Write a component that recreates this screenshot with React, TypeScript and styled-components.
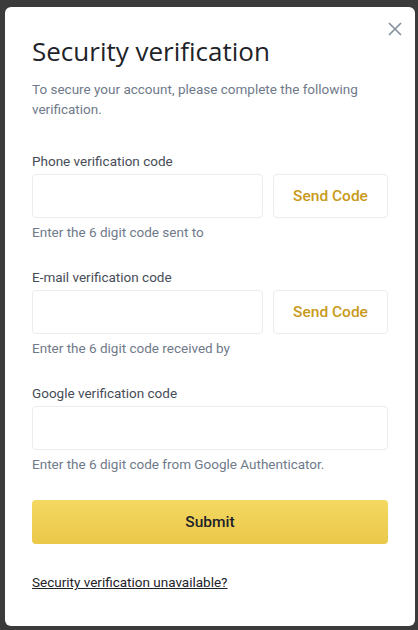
import React from "react";
import styled, { createGlobalStyle } from "styled-components";

const GlobalStyle = createGlobalStyle`
  html, body {
    margin: 0;
    padding: 0;
    background: #3b3b3b;
  }
  body {
    font-family: Roboto, "Noto Sans", sans-serif;
  }
  * {
    box-sizing: border-box;
  }
`;

const Overlay = styled.div`
  min-height: 630px;
  padding: 7px 3px 4px 5px;
  display: flex;
`;

const Modal = styled.div`
  position: relative;
  flex: 1;
  background: #ffffff;
  border-radius: 6px;
  padding: 28px 27px 30px 27px;
  display: flex;
  flex-direction: column;
`;

const CloseButton = styled.button`
  position: absolute;
  top: 11px;
  right: 9px;
  width: 22px;
  height: 22px;
  padding: 0;
  border: none;
  background: transparent;
  display: flex;
  align-items: center;
  justify-content: center;
  cursor: pointer;
`;

const Title = styled.h1`
  margin: 0;
  font-family: "Open Sans", sans-serif;
  font-size: 26px;
  line-height: 32px;
  font-weight: 400;
  color: #1e2329;
`;

const Subtitle = styled.p`
  margin: 12px 0 0;
  font-size: 13.5px;
  line-height: 20px;
  color: #707a8a;
`;

const Field = styled.div<{ $gap: number }>`
  margin-top: ${(p) => p.$gap}px;
  display: flex;
  flex-direction: column;
`;

const Label = styled.label`
  font-size: 13.5px;
  line-height: 20px;
  color: #474d57;
  margin-bottom: 3px;
`;

const InputRow = styled.div`
  display: flex;
  gap: 10px;
`;

const Input = styled.input`
  flex: 1;
  min-width: 0;
  height: 44px;
  border: 1px solid #eaecef;
  border-radius: 4px;
  padding: 0 12px;
  font-size: 14px;
  outline: none;
  background: #fff;
`;

const SendButton = styled.button`
  width: 115px;
  height: 44px;
  border: 1px solid #eaecef;
  border-radius: 4px;
  background: #fff;
  color: #c99a1a;
  font-family: inherit;
  font-size: 15.5px;
  font-weight: 500;
  cursor: pointer;
`;

const Helper = styled.div`
  margin-top: 4px;
  font-size: 13.5px;
  line-height: 20px;
  color: #707a8a;
`;

const SubmitButton = styled.button`
  margin-top: 26px;
  height: 44px;
  border: none;
  border-radius: 4px;
  background: linear-gradient(180deg, #f4d862 0%, #ebc849 100%);
  color: #1e2329;
  font-family: inherit;
  font-size: 15.5px;
  font-weight: 500;
  cursor: pointer;
`;

const HelpLink = styled.a`
  margin-top: 28px;
  align-self: flex-start;
  font-size: 13.5px;
  line-height: 20px;
  color: #1e2329;
  text-decoration: underline;
`;

const fields = [
  { label: "Phone verification code", helper: "Enter the 6 digit code sent to", send: true, gap: 32 },
  { label: "E-mail verification code", helper: "Enter the 6 digit code received by", send: true, gap: 25 },
  { label: "Google verification code", helper: "Enter the 6 digit code from Google Authenticator.", send: false, gap: 25 },
];

export default function App() {
  return (
    <>
      <GlobalStyle />
      <Overlay>
        <Modal>
          <CloseButton aria-label="Close">
            <svg width="14" height="14" viewBox="0 0 14 14">
              <path d="M1 1L13 13M13 1L1 13" stroke="#848e9c" strokeWidth="1.6" />
            </svg>
          </CloseButton>
          <Title>Security verification</Title>
          <Subtitle>
            To secure your account, please complete the following verification.
          </Subtitle>
          {fields.map((f) => (
            <Field key={f.label} $gap={f.gap}>
              <Label>{f.label}</Label>
              <InputRow>
                <Input />
                {f.send && <SendButton>Send Code</SendButton>}
              </InputRow>
              <Helper>{f.helper}</Helper>
            </Field>
          ))}
          <SubmitButton>Submit</SubmitButton>
          <HelpLink href="#">Security verification unavailable?</HelpLink>
        </Modal>
      </Overlay>
    </>
  );
}
